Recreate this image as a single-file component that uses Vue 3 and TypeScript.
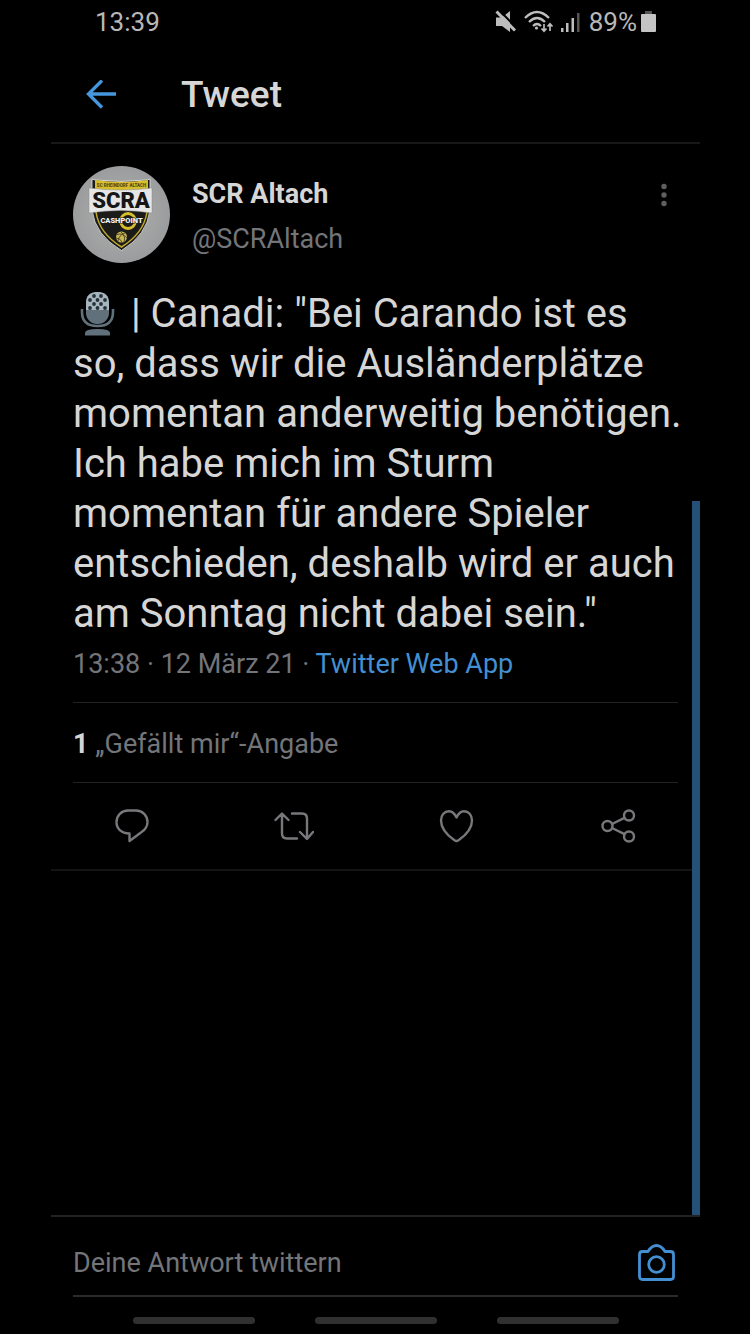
<script setup lang="ts">
import { ref } from 'vue'

const reply = ref('')

const tweet = {
  name: 'SCR Altach',
  handle: '@SCRAltach',
  text: '| Canadi: "Bei Carando ist es so, dass wir die Ausländerplätze momentan anderweitig benötigen. Ich habe mich im Sturm momentan für andere Spieler entschieden, deshalb wird er auch am Sonntag nicht dabei sein."',
  time: '13:38',
  date: '12 März 21',
  source: 'Twitter Web App',
  likes: 1,
}

const micDots: [number, number][] = [
  [14, 5], [21, 5],
  [10, 9], [17.5, 9], [25, 9],
  [14, 13], [21, 13],
  [10, 17], [17.5, 17], [25, 17],
]
</script>

<template>
  <div class="screen">
    <div class="status">
      <span>13:39</span>
      <div class="status-icons">
        <svg width="22" height="24" viewBox="0 0 22 24" aria-hidden="true">
          <path d="M1 7.500h6l8-6.500v21l-8-6H1z" fill="#bdbdbd" />
          <path d="M4 0l19 19.500" stroke="#000" stroke-width="2" />
          <path d="M1.500 1.500l18.500 19" stroke="#bdbdbd" stroke-width="3" />
        </svg>
        <svg width="30" height="24" viewBox="0 0 30 24" fill="none" stroke="#bdbdbd" stroke-width="2.300" aria-hidden="true">
          <path d="M1 8q12-12 24 0M5 12q8-8 16 0M9 16q4-4 8 0" />
          <circle cx="12.500" cy="18" r="1.600" fill="#bdbdbd" stroke="none" />
          <path d="M20 14v7M17.500 18.500l2.500 2.700 2.500-2.700M26 21v-7M23.500 16.500l2.500-2.700 2.500 2.700" stroke-width="1.700" />
        </svg>
        <svg width="20" height="24" viewBox="0 0 20 24" fill="#bdbdbd" aria-hidden="true">
          <path d="M0 18h2.500v4H0zM5 13h2.500v9H5zM10.500 8H13v14h-2.500z" />
          <path d="M16 3h2.500v19H16z" fill="#555" />
        </svg>
        <span class="percent">89%</span>
        <svg width="16" height="24" viewBox="0 0 16 24" aria-hidden="true">
          <path d="M4 1h7v4H4z" fill="#555" />
          <path d="M1 4h13q1 0 1 1v16q0 1-1 1H1q-1 0-1-1V5q0-1 1-1z" fill="#c4c4c4" />
        </svg>
      </div>
    </div>

    <header class="bar">
      <button class="plain back" type="button" aria-label="Zurück">
        <svg width="30" height="30" viewBox="0 0 30 30" fill="none" stroke="#4596dd" stroke-width="3.400" aria-hidden="true">
          <path d="M30 14H3M16 .5L2.500 14 16 27.500" />
        </svg>
      </button>
      <h1>Tweet</h1>
    </header>

    <main class="feed">
      <article>
        <div class="body">
          <div class="author">
            <svg class="avatar" viewBox="0 0 97 97" role="img" aria-label="SCR Altach Logo">
              <defs>
                <radialGradient id="stone">
                  <stop offset="0" stop-color="#b0b0b0" />
                  <stop offset="1" stop-color="#9b9c9d" />
                </radialGradient>
              </defs>
              <circle cx="48.500" cy="48.500" r="48.500" fill="url(#stone)" />
              <path d="M19 13l3 1q26 3 52 0l3-1v31q-3 25-28.500 40.500Q22 69 19 44z" fill="#1b1b19" stroke="#e8e8e8" stroke-width=".8" />
              <path d="M22 14q27 4 53 0v11H22z" fill="#d8bd2c" />
              <path d="M23 46q3 21 25.500 35Q71 67 74 46" fill="none" stroke="#c3aa2b" stroke-width="1.500" />
              <text x="48.500" y="21" text-anchor="middle" class="logo" font-size="4.500" fill="#554a18">SC RHEINDORF ALTACH</text>
              <path d="M16 22q32 4 63 0v25q-31-5-63 0z" fill="#e6e6e6" stroke="#888" stroke-width=".5" />
              <text x="48" y="42" text-anchor="middle" class="logo" font-size="22" fill="#161616">SCRA</text>
              <circle cx="55" cy="55" r="7.500" fill="none" stroke="#d8bd2c" stroke-width="2.800" />
              <text x="48.500" y="57" text-anchor="middle" class="logo" font-size="7.500" fill="#f2f2f2" stroke="#1b1b19" stroke-width="1" paint-order="stroke">CASHPOINT</text>
              <circle cx="48.500" cy="71" r="5.500" fill="#c9b755" />
              <path d="M43 69q6-3 11 3M45 75q1-6 7-8M48 66q5 4 3 10M43 72q4 0 6 4" fill="none" stroke="#4a4320" stroke-width=".9" />
            </svg>
            <div class="names">
              <strong>{{ tweet.name }}</strong>
              <span class="handle">{{ tweet.handle }}</span>
            </div>
            <button class="plain more" type="button" aria-label="Mehr">
              <svg width="6" height="24" viewBox="0 0 6 24" fill="#5e5f61" aria-hidden="true">
                <circle cx="3" cy="3.500" r="2.700" /><circle cx="3" cy="12" r="2.700" /><circle cx="3" cy="20.500" r="2.700" />
              </svg>
            </button>
          </div>

          <p class="text">
            <svg class="mic" viewBox="0 0 35 45" role="img" aria-label="Mikrofon">
              <rect x="6" y="1" width="23" height="32" rx="11" fill="#60717c" />
              <path d="M6 19v-7Q6 1 17.500 1T29 12v7z" fill="#a6b5be" />
              <circle v-for="([x, y], i) in micDots" :key="i" :cx="x" :cy="y" r="1.900" fill="#26323a" />
              <path d="M2 18v3q0 14 15.500 14T33 21v-3" fill="none" stroke="#60717c" stroke-width="2.600" />
              <path d="M5 44.500V42q0-4 12.500-4T30 42v2.500z" fill="#60717c" />
            </svg>
            {{ tweet.text }}
          </p>

          <p class="meta">{{ tweet.time }} · {{ tweet.date }} · <a href="#">{{ tweet.source }}</a></p>
          <p class="likes"><b>{{ tweet.likes }}</b> „Gefällt mir“-Angabe</p>
        </div>

        <div class="actions">
          <button class="plain" type="button" aria-label="Antworten">
            <svg width="40" height="36" viewBox="0 0 40 36" aria-hidden="true">
              <path d="M16 2.500h8c6.500 0 11.500 5 11.500 11.500 0 5-2.500 8-6.500 10.500L17.500 33v-7.500C9 25.500 4.500 20.500 4.500 14 4.500 7.500 9.500 2.500 16 2.500z" />
            </svg>
          </button>
          <button class="plain" type="button" aria-label="Retweeten">
            <svg width="40" height="36" viewBox="0 0 40 36" aria-hidden="true">
              <path d="M1.500 12L8 5.500l6.500 6.500M8 6v19.500q0 5 5 5H23M18 5.500h10q5 0 5 5v20M26 24l7 7 6-7" />
            </svg>
          </button>
          <button class="plain" type="button" aria-label="Gefällt mir">
            <svg width="40" height="36" viewBox="0 0 40 36" aria-hidden="true">
              <path d="M19.500 9.500C17.500 5 14.500 3.200 12 3.200 7.500 3.200 4 7 4 12.500 4 21 12 28.500 17.500 32.300q2 1.300 4 0C27 28.500 35 21 35 12.500c0-5.500-3.500-9.300-8-9.300-2.500 0-5.500 1.800-7.500 6.300z" />
            </svg>
          </button>
          <button class="plain" type="button" aria-label="Teilen">
            <svg width="40" height="36" viewBox="0 0 40 36" aria-hidden="true">
              <circle cx="8.500" cy="18" r="5" /><circle cx="30" cy="7.500" r="5" /><circle cx="30" cy="28.500" r="5" />
              <path d="M13 16l12.500-6.200M13 20l12.500 6.200" />
            </svg>
          </button>
        </div>
      </article>
      <div class="edge"></div>
    </main>

    <form class="reply" @submit.prevent>
      <div class="field">
        <input v-model="reply" type="text" placeholder="Deine Antwort twittern" aria-label="Deine Antwort twittern">
        <button class="plain" type="button" aria-label="Foto aufnehmen">
          <svg width="38" height="38" viewBox="0 0 38 38" fill="none" stroke="#438fd2" stroke-width="2.800" stroke-linejoin="round" aria-hidden="true">
            <path d="M4.500 7.500h5.500C12.500 3.500 15 1.500 18.500 1.500s6 2 8.500 6h5.500q3 0 3 3v22q0 3-3 3h-28q-3 0-3-3v-22q0-3 3-3z" />
            <circle cx="18.500" cy="20.500" r="7.800" />
          </svg>
        </button>
      </div>
    </form>

    <div class="gestures"><i></i><i></i><i></i></div>
  </div>
</template>

<style>
body {
  margin: 0;
  background: #000;
}
</style>

<style scoped>
.screen {
  box-sizing: border-box;
  min-height: 100vh;
  padding: 0 50px 0 51px;
  display: flex;
  flex-direction: column;
  background: #000;
  color: #d6d6d6;
  font-family: Roboto, "Liberation Sans", sans-serif;
  font-size: 27px;
}

.plain {
  display: flex;
  padding: 0;
  border: 0;
  background: none;
  color: inherit;
  font: inherit;
}

.status {
  height: 44px;
  padding: 0 43px 0 44px;
  display: flex;
  align-items: center;
  justify-content: space-between;
  color: #b8b8b8;
  font-size: 26px;
}

.status-icons {
  display: flex;
  align-items: center;
  gap: 7px;
}

.percent {
  margin: 0 -3px 0 1px;
}

.bar {
  height: 100px;
  padding: 4px 0 0 35px;
  display: flex;
  align-items: center;
  gap: 65px;
  border-bottom: 2px solid #171819;
  box-sizing: border-box;
}

h1 {
  margin: 0;
  font-size: 37px;
  line-height: 44px;
  font-weight: 500;
}

.feed {
  flex: 1;
  position: relative;
}

.body {
  padding: 22px 22px 0;
}

.author {
  display: flex;
  align-items: flex-start;
}

.avatar {
  width: 97px;
  height: 97px;
  margin-right: 22px;
}

.logo {
  font-family: Roboto, "Liberation Sans", sans-serif;
  font-weight: 900;
}

.names {
  flex: 1;
  display: flex;
  flex-direction: column;
  gap: 13px;
  padding-top: 12px;
  line-height: 32px;
}

.names strong {
  font-weight: 700;
}

.handle,
.meta,
.likes {
  color: #737579;
}

.more {
  margin: 17px 11px 0 0;
}

p {
  margin: 0;
}

.text {
  margin: 26px -6px 0 0;
  font-size: 40px;
  line-height: 50px;
}

.mic {
  width: 35px;
  height: 45px;
  margin: 0 6px 0 7px;
  vertical-align: -9px;
}

.meta {
  padding: 9px 0 22px;
  line-height: 32px;
  border-bottom: 1px solid #222;
}

.meta a {
  color: #438fd2;
  text-decoration: none;
}

.likes {
  padding: 25px 0 22px;
  line-height: 32px;
  border-bottom: 1px solid #222;
}

.likes b {
  color: #d6d6d6;
}

.actions {
  height: 88px;
  box-sizing: border-box;
  display: grid;
  grid-template-columns: repeat(4, 1fr);
  align-items: center;
  justify-items: center;
  border-bottom: 2px solid #141414;
}

.actions svg {
  fill: none;
  stroke: #77787b;
  stroke-width: 2.4;
  stroke-linejoin: round;
  stroke-linecap: round;
}

.edge {
  position: absolute;
  top: 33.3%;
  right: 0;
  bottom: 0;
  width: 8px;
  background: #255179;
}

.reply {
  padding: 0 22px;
  border-top: 2px solid #222;
}

.field {
  height: 80px;
  box-sizing: border-box;
  padding: 13px 2px 0 0;
  display: flex;
  align-items: center;
  border-bottom: 2px solid #2b2b2b;
}

input {
  flex: 1;
  min-width: 0;
  padding: 0;
  border: 0;
  outline: 0;
  background: none;
  color: #d6d6d6;
  font: inherit;
}

input::placeholder {
  color: #737579;
  opacity: 1;
}

.gestures {
  height: 37px;
  box-sizing: border-box;
  padding-top: 20px;
  display: flex;
  justify-content: center;
  gap: 60px;
}

.gestures i {
  width: 122px;
  height: 7px;
  border-radius: 4px;
  background: #303030;
}
</style>
